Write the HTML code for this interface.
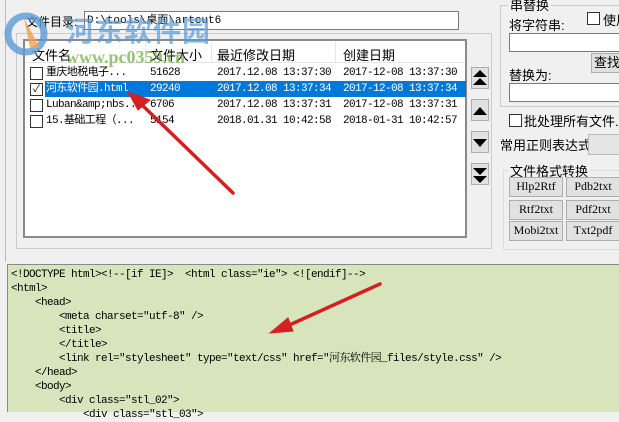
<!DOCTYPE html>
<html><head><style>
body{margin:0;width:619px;height:412px;overflow:hidden;background:#f0f0f0;position:relative;font-family:"Liberation Sans","Noto Sans CJK SC",sans-serif;font-size:12px;color:#000}
.a{position:absolute;white-space:nowrap}
.box{position:absolute;background:#fff;border:1px solid #7a7a7a}
.btn{position:absolute;background:#e1e1e1;border:1px solid #adadad;font-family:"Liberation Serif","Noto Serif CJK SC",serif;font-size:12px;text-align:center;line-height:17px}
.cb{position:absolute;width:11px;height:11px;border:1px solid #333;background:#fff}
.row{position:absolute;left:28px;width:438px;height:16px;font-size:11px;letter-spacing:-0.6px;line-height:16px;font-family:"Liberation Mono","Noto Sans CJK SC",monospace;white-space:pre}
.row span{position:absolute}
.code{position:absolute;left:7px;top:264px;width:612px;height:148px;background:#d7e4bc;border-top:1px solid #888;border-left:1px solid #888;font-family:"Liberation Mono","Noto Serif CJK SC",monospace;font-size:11px;letter-spacing:-0.6px;line-height:14px;white-space:pre;padding:3px 0 0 3px;box-sizing:border-box}
</style></head><body>
<div class="a" style="left:5px;top:0;width:1px;height:262px;background:#bbb"></div>
<div class="a" style="left:16px;top:33px;width:474px;height:214px;border:1px solid #ccc"></div>
<div class="a" style="left:26px;top:13px;font-size:12px">文件目录:</div>
<div class="box" style="left:84px;top:11px;width:375px;height:19px;font-family:'Liberation Mono',monospace;font-size:11px;line-height:19px;padding-left:2px;box-sizing:border-box">D:\tools\桌面\artcut6</div>
<div class="box" style="left:23px;top:39px;width:444px;height:199px;border:2px solid #8a8a8a;box-sizing:border-box"></div>
<div class="a" style="left:26px;top:41px;width:439px;height:21px;background:#fff;border-bottom:1px solid #e5e5e5"></div>
<div class="a" style="left:145px;top:42px;width:1px;height:20px;background:#e5e5e5"></div>
<div class="a" style="left:211px;top:42px;width:1px;height:20px;background:#e5e5e5"></div>
<div class="a" style="left:335px;top:42px;width:1px;height:20px;background:#e5e5e5"></div>
<div class="a" style="left:32px;top:45px;font-size:13px">文件名</div>
<div class="a" style="left:150px;top:45px;font-size:13px">文件大小</div>
<div class="a" style="left:217px;top:45px;font-size:13px">最近修改日期</div>
<div class="a" style="left:343px;top:45px;font-size:13px">创建日期</div>
<div class="row" style="top:65px"><span style="left:18px">重庆地税电子...</span><span style="left:122px">51628</span><span style="left:189px">2017.12.08 13:37:30</span><span style="left:315px">2017-12-08 13:37:30</span></div>
<div class="row" style="top:81px"><span style="left:17px;top:0;width:421px;height:16px;background:#0078d7"></span><span style="left:18px;color:#fff">河东软件园.html</span><span style="left:122px;color:#fff">29240</span><span style="left:189px;color:#fff">2017.12.08 13:37:34</span><span style="left:315px;color:#fff">2017-12-08 13:37:34</span></div>
<div class="row" style="top:97px"><span style="left:18px">Luban&amp;amp;nbs...</span><span style="left:122px">6706</span><span style="left:189px">2017.12.08 13:37:31</span><span style="left:315px">2017-12-08 13:37:31</span></div>
<div class="row" style="top:113px"><span style="left:18px">15.基础工程（...</span><span style="left:122px">5154</span><span style="left:189px">2018.01.31 10:42:58</span><span style="left:315px">2018-01-31 10:42:57</span></div>
<div class="cb" style="left:30px;top:67px"></div>
<div class="cb" style="left:30px;top:83px;font-size:10px;line-height:11px;text-align:center">✓</div>
<div class="cb" style="left:30px;top:99px"></div>
<div class="cb" style="left:30px;top:115px"></div>
<svg class="a" style="left:471px;top:67px" width="19" height="122">
<g fill="#e1e1e1" stroke="#adadad"><rect x="0.5" y="0.5" width="17" height="21"/><rect x="0.5" y="32.5" width="17" height="21"/><rect x="0.5" y="64.5" width="17" height="21"/><rect x="0.5" y="96.5" width="17" height="21"/></g>
<g fill="#000"><path d="M2 10L9 3L16 10Z M2 18L9 11L16 18Z"/><path d="M2 48L9 40L16 48Z"/><path d="M2 72L16 72L9 80Z"/><path d="M2 101L16 101L9 108Z M2 109L16 109L9 116Z"/></g>
</svg>
<div class="a" style="left:500px;top:5px;width:130px;height:100px;border:1px solid #ccc"></div>
<div class="a" style="left:508px;top:-5px;background:#f0f0f0;padding:0 2px;font-size:13px">串替换</div>
<div class="a" style="left:509px;top:15px;font-size:13px">将字符串:</div>
<div class="cb" style="left:587px;top:12px"></div>
<div class="a" style="left:603px;top:10px;font-size:13px">使用</div>
<div class="box" style="left:509px;top:33px;width:120px;height:17px"></div>
<div class="btn" style="left:591px;top:53px;width:40px;height:18px;font-family:'Liberation Sans','Noto Sans CJK SC',sans-serif;font-size:13px;text-align:left;padding-left:2px">查找</div>
<div class="a" style="left:509px;top:65px;font-size:13px">替换为:</div>
<div class="box" style="left:509px;top:83px;width:120px;height:17px"></div>
<div class="cb" style="left:509px;top:114px"></div>
<div class="a" style="left:524px;top:111px;font-size:13px">批处理所有文件.</div>
<div class="a" style="left:500px;top:135px;font-size:13px">常用正则表达式</div>
<div class="a" style="left:588px;top:134px;width:40px;height:19px;background:#e5e5e5;border:1px solid #bbb"></div>
<div class="a" style="left:503px;top:170px;width:130px;height:78px;border:1px solid #ddd"></div>
<div class="a" style="left:508px;top:161px;background:#f0f0f0;padding:0 2px;font-size:13px">文件格式转换</div>
<div class="btn" style="left:509px;top:177px;width:52px;height:18px">Hlp2Rtf</div>
<div class="btn" style="left:566px;top:177px;width:52px;height:18px">Pdb2txt</div>
<div class="btn" style="left:509px;top:200px;width:52px;height:18px">Rtf2txt</div>
<div class="btn" style="left:566px;top:200px;width:52px;height:18px">Pdf2txt</div>
<div class="btn" style="left:509px;top:221px;width:52px;height:18px">Mobi2txt</div>
<div class="btn" style="left:566px;top:221px;width:52px;height:18px">Txt2pdf</div>
<div class="code">&lt;!DOCTYPE html&gt;&lt;!--[if IE]&gt;  &lt;html class="ie"&gt; &lt;![endif]--&gt;
&lt;html&gt;
    &lt;head&gt;
        &lt;meta charset="utf-8" /&gt;
        &lt;title&gt;
        &lt;/title&gt;
        &lt;link rel="stylesheet" type="text/css" href="河东软件园_files/style.css" /&gt;
    &lt;/head&gt;
    &lt;body&gt;
        &lt;div class="stl_02"&gt;
            &lt;div class="stl_03"&gt;</div>
<svg class="a" style="left:0;top:8px" width="60" height="60"><circle cx="26" cy="26" r="18" fill="none" stroke="#5b9bd5" stroke-width="7" opacity=".8"/><path d="M24 10L40 40L30 40Z" fill="#f0a050" opacity=".8"/></svg>
<div class="a" style="left:66px;top:10px;font-size:28px;font-weight:bold;color:#5b9bd5;opacity:.7;letter-spacing:1px">河东软件园</div>
<div class="a" style="left:66px;top:47px;font-size:18px;font-weight:bold;color:#6aab3c;opacity:.7;font-family:'Liberation Serif',serif">www.pc0359.cn</div>
<svg class="a" style="left:0;top:0" width="619" height="412">
<g stroke="#d42020" stroke-width="3.5" fill="#d42020" stroke-linecap="round">
<line x1="233" y1="193" x2="140" y2="103"/><path d="M128 92L150 100L138 110Z" stroke-width="1"/>
<line x1="380" y1="284" x2="285" y2="327"/><path d="M270 333L288 318L293 331Z" stroke-width="1"/>
</g></svg>
</body></html>
